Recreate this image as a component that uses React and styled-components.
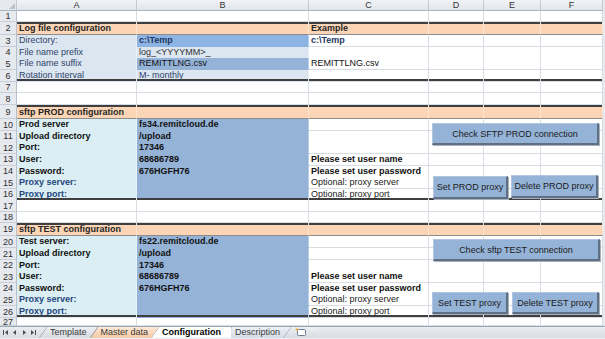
import React from 'react'
import styled, { createGlobalStyle } from 'styled-components'

const GlobalStyle = createGlobalStyle`
  html, body { margin: 0; padding: 0; background: #fff; }
  body { font-family: "Liberation Sans", Arial, sans-serif; }
  #root { width: 605px; height: 339px; overflow: hidden; }
`

const COLS = '17px 120px 172px 120px 55px 57px 62px 2px'
const LETTERS = ['A', 'B', 'C', 'D', 'E', 'F']
const GRID = '#d8dce3'
const PEACH = '#fbd5b5'
const PALE = '#dce6f1'
const SKY = '#daeef3'
const STEEL = '#95b3d7'
const STEEL_HI = '#8db4e2'
const SLATE = '#2f4468'
const NAVY = '#1f3864'
const PROXY = '#24467d'
const RULE = '#3f3f3f'

const Window = styled.div`
  width: 605px;
  height: 339px;
  display: flex;
  flex-direction: column;
  background: #eef0f3;
`

const Sheet = styled.div`
  position: relative;
`

const Row = styled.div`
  display: grid;
  grid-template-columns: ${COLS};
  height: ${p => p.$h}px;
  overflow: hidden;
`

const Corner = styled.div`
  background: #e6e9ee;
  border-right: 1px solid #c3c9d2;
  border-bottom: 1px solid #a9b4c2;
  box-sizing: border-box;
  display: flex;
  align-items: flex-end;
  justify-content: flex-end;
  padding: 0 1px 1px 0;
  &::after {
    content: '';
    width: 0;
    height: 0;
    border-left: 6px solid transparent;
    border-bottom: 6px solid #bcc3cd;
  }
`

const ColHead = styled.div`
  background: linear-gradient(#f1f3f6, #e1e5ea);
  border-right: 1px solid #c3c9d2;
  border-bottom: 1px solid #a9b4c2;
  box-sizing: border-box;
  font-size: 9px;
  line-height: 10px;
  color: #333;
  text-align: center;
`

const RowNum = styled.div`
  background: #e6e9ee;
  border-right: 1px solid #b8c0cb;
  border-bottom: 1px solid #c9ced6;
  box-sizing: border-box;
  font-size: 9px;
  line-height: ${p => (p.$short ? 8 : 10)}px;
  color: #2e2e2e;
  display: flex;
  align-items: ${p => (p.$short ? 'flex-start' : 'center')};
  justify-content: center;
  overflow: hidden;
`

const Edge = styled.div`
  background: #e6e9ee;
`

const rule = p => {
  const s = []
  if (p.$top) s.push(`inset 0 2px 0 ${RULE}`)
  if (p.$bottom) s.push(`inset 0 -2px 0 ${RULE}`)
  return s.length ? s.join(', ') : 'none'
}

const Cell = styled.div`
  display: flex;
  align-items: flex-end;
  padding: 0 2px 1px;
  box-sizing: border-box;
  white-space: nowrap;
  font-size: 9px;
  line-height: 10px;
  font-weight: ${p => (p.$bold ? 700 : 400)};
  color: ${p => p.$color || '#222'};
  background: ${p => p.$bg || '#fff'};
  border-right: 1px solid ${p => (p.$bg ? 'rgba(255,255,255,0.35)' : GRID)};
  border-bottom: 1px solid ${p => (p.$band ? '#8c8c8c' : p.$bg ? 'transparent' : GRID)};
  box-shadow: ${rule};
`

const Shape = styled.div`
  position: absolute;
  left: ${p => p.$x}px;
  top: ${p => p.$y}px;
  width: ${p => p.$w}px;
  height: ${p => p.$h}px;
  box-sizing: border-box;
  background: #95b3d7;
  border: 1px solid #b3c6df;
  border-right: 2px solid #5f6f84;
  border-bottom: 2px solid #5f6f84;
  box-shadow: 1px 1px 0 #a8b0bb;
  display: flex;
  align-items: center;
  justify-content: center;
  font-size: 9px;
  color: #1b1b1b;
  white-space: nowrap;
`

const TabBar = styled.div`
  height: 11px;
  display: flex;
  align-items: stretch;
  background: linear-gradient(#e9ecf0, #d9dee5);
  border-top: 1px solid #9aa6b6;
  box-sizing: content-box;
`

const Nav = styled.div`
  width: 39px;
  display: flex;
  align-items: center;
`

const Tabs = styled.div`
  display: flex;
  align-items: stretch;
`

const tabFill = {
  gray: 'linear-gradient(#eef0f3, #d6dbe2)',
  peach: 'linear-gradient(#fde9d8, #f7c9a2)',
  blue: 'linear-gradient(#eef2f7, #d3dbe6)',
  white: '#fff',
}

const Tab = styled.div`
  position: relative;
  z-index: ${p => (p.$active ? 3 : 1)};
  margin-left: -7px;
  padding: 0 10px 0 11px;
  background: ${p => tabFill[p.$tone]};
  clip-path: polygon(8px 0, 100% 0, 100% 100%, 0 100%);
  font-size: 9px;
  line-height: 11px;
  font-weight: ${p => (p.$active ? 700 : 400)};
  color: ${p => (p.$active ? '#000' : '#3a3a3a')};
  white-space: nowrap;
  display: flex;
  align-items: center;
  &::before {
    content: '';
    position: absolute;
    left: 0;
    top: 0;
    width: 8px;
    height: 100%;
    background: linear-gradient(to bottom right, transparent calc(50% - 0.7px), #7d8898 50%, transparent calc(50% + 0.7px));
  }
  &:first-child {
    margin-left: 0;
  }
`

const Footer = styled.div`
  flex: 1;
  background: #eef0f3;
`

const NavArrows = () => (
  <svg width="39" height="11" viewBox="0 0 39 11">
    <g fill="#4b4b4b">
      <rect x="3" y="3" width="1" height="5" />
      <polygon points="8,3 8,8 5,5.5" />
      <polygon points="16,3 16,8 13,5.5" />
      <polygon points="23,3 23,8 26,5.5" />
      <polygon points="31,3 31,8 34,5.5" />
      <rect x="35" y="3" width="1" height="5" />
    </g>
  </svg>
)

const InsertIcon = () => (
  <svg width="13" height="10" viewBox="0 0 13 10">
    <rect x="3.5" y="2.5" width="8" height="6" rx="1" fill="#fff" stroke="#6d7d93" />
    <path d="M3 0.3 L3.7 1.9 L5.3 2.4 L3.7 2.9 L3 4.5 L2.3 2.9 L0.7 2.4 L2.3 1.9 Z" fill="#f2a53a" />
  </svg>
)

const e = {}
const rows = [
  { h: 11, cells: [] },
  { h: 13, band: true, top: true, cells: [{ t: 'Log file configuration', b: 1, c: '#262626' }, e, { t: 'Example', b: 1, c: '#262626' }] },
  { h: 11.7, cells: [{ t: 'Directory:', bg: PALE, c: SLATE }, { t: 'c:\\Temp', bg: STEEL_HI, b: 1, c: NAVY }, { t: 'c:\\Temp', b: 1, c: NAVY }] },
  { h: 11.7, cells: [{ t: 'File name prefix', bg: PALE, c: SLATE }, { t: 'log_<YYYYMM>_', bg: PALE, c: '#333' }] },
  { h: 11.7, cells: [{ t: 'File name suffix', bg: PALE, c: SLATE }, { t: 'REMITTLNG.csv', bg: STEEL, c: '#111' }, { t: 'REMITTLNG.csv', c: '#111' }] },
  { h: 11.7, bottom: true, cells: [{ t: 'Rotation interval', bg: PALE, c: SLATE }, { t: 'M- monthly', bg: PALE, c: SLATE }] },
  { h: 11.7, cells: [] },
  { h: 11.7, cells: [] },
]

const serverBlock = (title, name, host) => [
  { h: title === 'PROD' ? 14 : 13, band: true, top: true, cells: [{ t: `sftp ${title} configuration`, b: 1, c: '#262626' }] },
  { h: 11.6, cells: [{ t: name, bg: SKY, b: 1, c: '#111' }, { t: host, bg: STEEL, b: 1, c: '#111' }] },
  { h: 11.6, cells: [{ t: 'Upload directory', bg: SKY, b: 1, c: '#111' }, { t: '/upload', bg: STEEL, b: 1, c: '#111' }] },
  { h: 11.6, cells: [{ t: 'Port:', bg: SKY, b: 1, c: '#111' }, { t: '17346', bg: STEEL, b: 1, c: '#111' }] },
  { h: 11.6, cells: [{ t: 'User:', bg: SKY, b: 1, c: '#111' }, { t: '68686789', bg: STEEL, b: 1, c: '#111' }, { t: 'Please set user name', b: 1, c: '#111' }] },
  { h: 11.6, cells: [{ t: 'Password:', bg: SKY, b: 1, c: '#111' }, { t: '676HGFH76', bg: STEEL, b: 1, c: '#111' }, { t: 'Please set user password', b: 1, c: '#111' }] },
  { h: 11.6, cells: [{ t: 'Proxy server:', bg: SKY, b: 1, c: PROXY }, { bg: STEEL }, { t: 'Optional: proxy server', c: '#222' }] },
  { h: 11.6, bottom: true, cells: [{ t: 'Proxy port:', bg: SKY, b: 1, c: PROXY }, { bg: STEEL }, { t: 'Optional: proxy port', c: '#222' }] },
]

const allRows = [
  ...rows,
  ...serverBlock('PROD', 'Prod server', 'fs34.remitcloud.de'),
  { h: 11.6, cells: [] },
  { h: 11.6, cells: [] },
  ...serverBlock('TEST', 'Test server:', 'fs22.remitcloud.de'),
  { h: 8.2, short: true, cells: [] },
]

const buttons = [
  { label: 'Check SFTP PROD connection', x: 432, y: 123, w: 167, h: 22 },
  { label: 'Set PROD proxy', x: 433, y: 176, w: 75, h: 23 },
  { label: 'Delete PROD proxy', x: 511, y: 175, w: 87, h: 23 },
  { label: 'Check sftp TEST connection', x: 433, y: 239, w: 167, h: 22 },
  { label: 'Set TEST proxy', x: 432, y: 292, w: 76, h: 22 },
  { label: 'Delete TEST proxy', x: 512, y: 292, w: 87, h: 22 },
]

const tabs = [
  { name: 'Template', tone: 'gray' },
  { name: 'Master data', tone: 'peach' },
  { name: 'Configuration', tone: 'white', active: true },
  { name: 'Description', tone: 'blue' },
]

const App = () => {
  return (
    <Window>
      <GlobalStyle />
      <Sheet>
        <Row $h={11}>
          <Corner />
          {LETTERS.map(l => (
            <ColHead key={l}>{l}</ColHead>
          ))}
          <Edge />
        </Row>
        {allRows.map((row, i) => (
          <Row key={i} $h={row.h}>
            <RowNum $short={row.short}>{i + 1}</RowNum>
            {LETTERS.map((l, j) => {
              const c = row.cells[j] || e
              return (
                <Cell
                  key={l}
                  $bg={row.band ? PEACH : c.bg}
                  $band={row.band}
                  $bold={c.b}
                  $color={c.c}
                  $top={row.top}
                  $bottom={row.bottom}
                >
                  {c.t}
                </Cell>
              )
            })}
            <Edge />
          </Row>
        ))}
        {buttons.map(b => (
          <Shape key={b.label} $x={b.x} $y={b.y} $w={b.w} $h={b.h}>
            {b.label}
          </Shape>
        ))}
      </Sheet>
      <TabBar>
        <Nav>
          <NavArrows />
        </Nav>
        <Tabs>
          {tabs.map(t => (
            <Tab key={t.name} $tone={t.tone} $active={t.active}>
              {t.name}
            </Tab>
          ))}
          <Tab $tone="gray">
            <InsertIcon />
          </Tab>
        </Tabs>
      </TabBar>
      <Footer />
    </Window>
  )
}

export default App
